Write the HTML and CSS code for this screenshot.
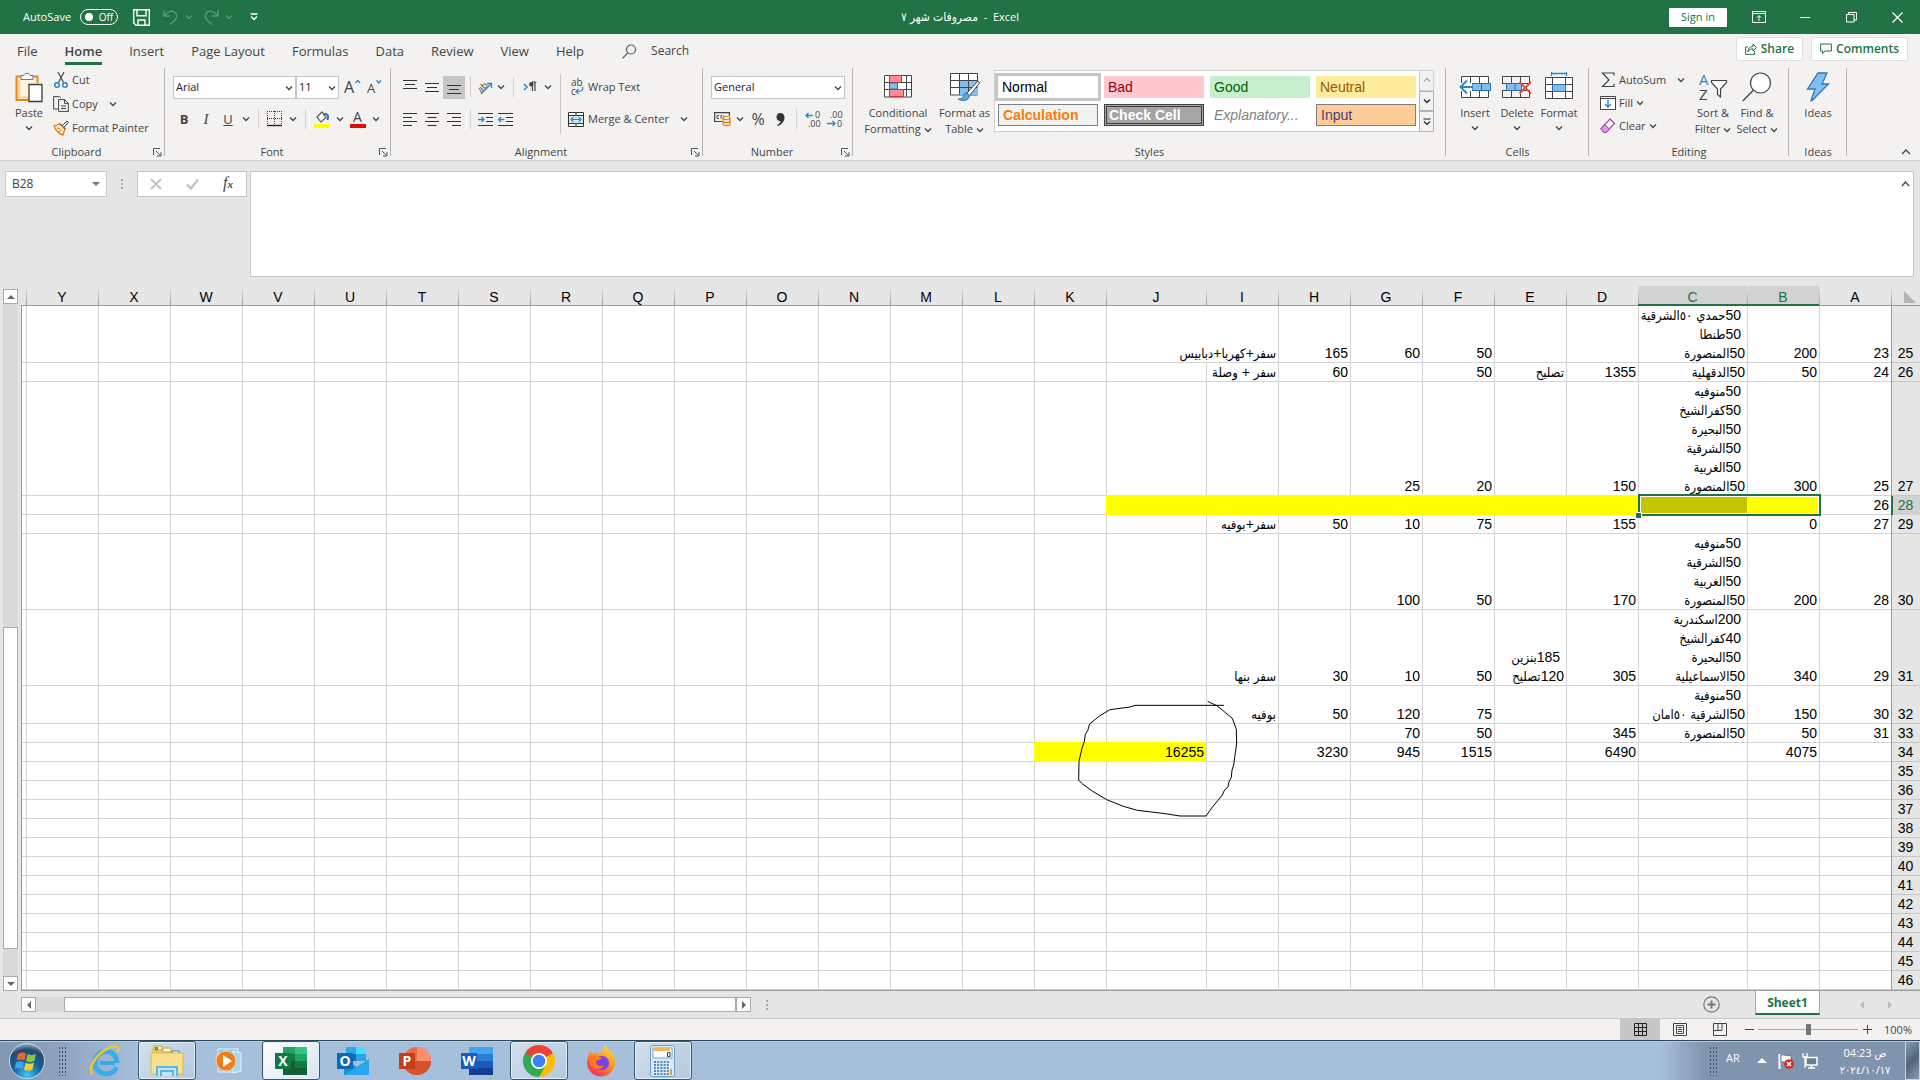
FILE: index.html
```html
<!DOCTYPE html>
<html lang="en">
<head>
<meta charset="utf-8">
<title>مصروفات شهر ٧ - Excel</title>
<link rel="stylesheet" href="styles.css">
</head>
<body>
<svg class="defs" aria-hidden="true">
  <symbol id="chev" viewBox="0 0 8 6"><path d="M1 1.5l3 3 3-3" fill="none" stroke="currentColor" stroke-width="1.3"/></symbol>
  <symbol id="launch" viewBox="0 0 9 9"><path d="M.5 7V.5H7M3 3l4.500 4.500M8 4v4H4" fill="none" stroke="#555"/></symbol>
</svg>

<header class="titlebar">
  <label class="autosave" for="autosave">AutoSave</label>
  <button class="toggle" id="autosave"><i></i>Off</button>
  <button class="qa save" aria-label="Save"><svg width="17" height="17" viewBox="0 0 17 17"><path d="M.7.700h15.600v15.600H3L.7 14zM4 .700v6h9v-6M5 16v-5h7v5" fill="none" stroke="#fff" stroke-width="1.400"/></svg></button>
  <button class="qa dim" aria-label="Undo"><svg width="16" height="16" viewBox="0 0 16 16"><path d="M1 1v6h6M1.500 6.500C5 2 10 1 12.500 4S14 10 7 15.500" fill="none" stroke="currentColor" stroke-width="1.400"/></svg><svg class="c"><use href="#chev"/></svg></button>
  <button class="qa dim" aria-label="Redo"><svg width="16" height="16" viewBox="0 0 16 16"><path d="M15 1v6H9M14.500 6.500C11 2 6 1 3.500 4S2 10 9 15.500" fill="none" stroke="currentColor" stroke-width="1.400"/></svg><svg class="c"><use href="#chev"/></svg></button>
  <button class="qa" aria-label="Customize Quick Access Toolbar"><svg width="8" height="8" viewBox="0 0 8 8"><path d="M.5 1h7M1 3.500l3 3 3-3" fill="none" stroke="#fff" stroke-width="1.300"/></svg></button>
  <h1 class="doc"><bdi>مصروفات شهر ٧</bdi>&nbsp; - &nbsp;Excel</h1>
  <button class="signin">Sign in</button>
  <div class="win">
    <button aria-label="Ribbon Display Options"><svg width="14" height="12" viewBox="0 0 14 12"><path d="M.5.500h13v11H.5zM.5 2.500h13M7 10V5M5 6.500L7 4.500l2 2" fill="none" stroke="#fff"/></svg></button>
    <button aria-label="Minimize"><svg width="10" height="10" viewBox="0 0 10 10"><path d="M0 5.500h10" stroke="#fff"/></svg></button>
    <button aria-label="Restore"><svg width="11" height="11" viewBox="0 0 11 11"><path d="M.5 2.500h7.500v7.500H.5zM2.500 2.500V.500h8v7.500H8" fill="none" stroke="#fff"/></svg></button>
    <button aria-label="Close"><svg width="11" height="11" viewBox="0 0 11 11"><path d="M.5.500l10 10M10.500.500l-10 10" stroke="#fff" stroke-width="1.200"/></svg></button>
  </div>
</header>

<nav class="tabs">
  <a href="#file">File</a><a href="#home" class="on">Home</a><a href="#insert">Insert</a><a href="#layout">Page Layout</a><a href="#formulas">Formulas</a><a href="#data">Data</a><a href="#review">Review</a><a href="#view">View</a><a href="#help">Help</a>
  <button class="search"><svg width="15" height="15" viewBox="0 0 15 15"><circle cx="9" cy="5.500" r="4.500" fill="none" stroke="#555" stroke-width="1.200"/><path d="M5.800 8.800L.5 14.300" stroke="#555" stroke-width="1.200"/></svg>Search</button>
  <div class="collab">
    <button><svg width="12" height="12" viewBox="0 0 12 12"><path d="M3 4H.6v7.400h9V8M2.800 9C3 5.500 5 3.500 8 3.500V1l3.400 3.500L8 8V5.800C6 5.800 4 6.500 2.800 9z" fill="none" stroke="#217346"/></svg>Share</button>
    <button><svg width="12" height="12" viewBox="0 0 12 12"><path d="M.6 1h10.800v7H5l-2.400 2.700V8H.6z" fill="none" stroke="#217346"/></svg>Comments</button>
  </div>
</nav>

<section class="ribbon">
  <div class="group clipboard">
    <div class="tools">
      <button class="big"><span class="pic"><svg width="28" height="30" viewBox="0 0 28 30"><path d="M2 5h20v7h-7v15H2z" fill="#fdf3df"/><path d="M14.500 28H1.500V4.500h21V11" fill="none" stroke="#e08a1e" stroke-width="2"/><path d="M4 8v17.500h10" fill="none" stroke="#f9d08b" stroke-width="2"/><path d="M6 7.500v-4h3C9.500.500 14.500.500 15 3.500h3v4z" fill="#fff" stroke="#777"/><path d="M14 12.500h13v17H14z" fill="#fff" stroke="#3b3b3b" stroke-width="1.300"/></svg></span>Paste<svg class="c"><use href="#chev"/></svg></button>
      <div class="list">
        <button><svg width="16" height="16" viewBox="0 0 16 16"><path d="M5 0l5.500 10.500M11 0L5.500 10.500" stroke="#555" stroke-width="1.400"/><circle cx="4" cy="13" r="2.300" fill="none" stroke="#2b88c9" stroke-width="1.500"/><circle cx="12" cy="13" r="2.300" fill="none" stroke="#2b88c9" stroke-width="1.500"/></svg>Cut</button>
        <button><svg width="16" height="16" viewBox="0 0 16 16"><path d="M5 13H.6V.600h6L8 2M5.600 3.600h6l3.800 3.800v8H5.600zM11.500 3.600v4h4M8 10h5M8 12.500h5" fill="none" stroke="#444"/></svg>Copy<svg class="c far"><use href="#chev"/></svg></button>
        <button><svg width="16" height="16" viewBox="0 0 16 16"><path d="M1 6l6-2 5 5-2 6C6 14 3 11 1 6z" fill="#fbe3c3" stroke="#e07f1a" stroke-width="1.300"/><path d="M7 3.500L12.500 9M9 6l5-5 1.500 1.500-5 5" fill="#fff" stroke="#444"/><path d="M4 8l3 1M6 12l2-2" stroke="#e07f1a"/></svg>Format Painter</button>
      </div>
    </div>
    <footer><span>Clipboard</span><svg class="l"><use href="#launch"/></svg></footer>
  </div>

  <div class="group font">
    <div class="tools rows">
      <div class="row">
        <span class="combo face"><select aria-label="Font"><option>Arial</option></select><svg class="c"><use href="#chev"/></svg></span>
        <span class="combo size"><select aria-label="Font size"><option>11</option></select><svg class="c"><use href="#chev"/></svg></span>
        <button class="ib"><svg width="18" height="18" viewBox="0 0 18 18"><text x="0" y="15" class="t16">A</text><path d="M11.500 5l2.300-2.500L16.100 5" fill="none" stroke="#2b88c9" stroke-width="1.300"/></svg></button>
        <button class="ib"><svg width="18" height="18" viewBox="0 0 18 18"><text x="1" y="15" class="t13">A</text><path d="M10.500 2.500L12.700 5 15 2.500" fill="none" stroke="#2b88c9" stroke-width="1.300"/></svg></button>
      </div>
      <div class="row">
        <button class="ib b">B</button><button class="ib i">I</button><button class="ib u">U</button><button class="dd"><svg class="c"><use href="#chev"/></svg></button><hr>
        <button class="ib"><svg width="16" height="16" viewBox="0 0 16 16"><path d="M0 .500h15M.5 0v14M14.500 0v14M7.500 0v14M0 7.500h15" fill="none" stroke="#444" stroke-dasharray="1 1"/><path d="M0 14.500h15" stroke="#222" stroke-width="1.400"/></svg></button><button class="dd"><svg class="c"><use href="#chev"/></svg></button><hr>
        <button class="ib"><svg width="16" height="17" viewBox="0 0 16 17"><path d="M3 6l5-5 4 5.500-5 4.500z" fill="#fff" stroke="#555" stroke-width="1.200"/><path d="M9 3.500C14 2 15 5 13.500 9" fill="none" stroke="#2b6cb0" stroke-width="2"/><path d="M0 13h16v4H0z" fill="#ff0"/></svg></button><button class="dd"><svg class="c"><use href="#chev"/></svg></button>
        <button class="ib"><svg width="16" height="17" viewBox="0 0 16 17"><text x="3" y="11" class="t14">A</text><path d="M0 13h16v4H0z" fill="#e00b0b"/></svg></button><button class="dd"><svg class="c"><use href="#chev"/></svg></button>
      </div>
    </div>
    <footer><span>Font</span><svg class="l"><use href="#launch"/></svg></footer>
  </div>

  <div class="group align">
    <div class="tools">
      <div class="rows">
        <div class="row">
          <button class="ib"><svg width="14" height="14" viewBox="0 0 14 14"><path d="M0 .500h14M2 4.500h10M0 8.500h14" stroke="#333"/></svg></button><button class="ib"><svg width="14" height="14" viewBox="0 0 14 14"><path d="M0 3.500h14M2 7.500h10M0 11.500h14" stroke="#333"/></svg></button><button class="ib act"><svg width="14" height="14" viewBox="0 0 14 14"><path d="M0 5.500h14M2 9.500h10M0 13.500h14" stroke="#333"/></svg></button><hr>
          <button class="ib slim"><svg width="16" height="16" viewBox="0 0 16 16"><text x="0" y="11" class="t10" transform="rotate(-45 6 8)">ab</text><path d="M4 15L14 5M10 4.500h4.500V9" fill="none" stroke="#2b88c9" stroke-width="1.300"/></svg></button><button class="dd"><svg class="c"><use href="#chev"/></svg></button><hr>
          <button class="ib"><svg width="14" height="12" viewBox="0 0 14 12"><path d="M1 3l3 3-3 3" fill="none" stroke="#2b88c9" stroke-width="1.500"/><path d="M9 1h4.500M9.500 1v9M12 1v9" stroke="#444" stroke-width="1.200"/><circle cx="8.300" cy="3.200" r="2.200" fill="#444"/></svg></button><button class="dd"><svg class="c"><use href="#chev"/></svg></button>
        </div>
        <div class="row">
          <button class="ib"><svg width="14" height="14" viewBox="0 0 14 14"><path d="M0 1.500h14M0 5.500h9M0 9.500h14M0 13.500h9" stroke="#333"/></svg></button><button class="ib"><svg width="14" height="14" viewBox="0 0 14 14"><path d="M0 1.500h14M2.500 5.500h9M0 9.500h14M2.500 13.500h9" stroke="#333"/></svg></button><button class="ib"><svg width="14" height="14" viewBox="0 0 14 14"><path d="M0 1.500h14M5 5.500h9M0 9.500h14M5 13.500h9" stroke="#333"/></svg></button><hr>
          <button class="ib slim"><svg width="15" height="13" viewBox="0 0 15 13"><path d="M0 .500h15M8 4.500h7M8 8.500h7M0 12.500h15" stroke="#333"/><path d="M0 6.500h6M3.500 4L6 6.500 3.500 9" fill="none" stroke="#2b88c9" stroke-width="1.300"/></svg></button><button class="ib"><svg width="15" height="13" viewBox="0 0 15 13"><path d="M0 .500h15M8 4.500h7M8 8.500h7M0 12.500h15" stroke="#333"/><path d="M.5 6.500h6M3 4L.500 6.500 3 9" fill="none" stroke="#2b88c9" stroke-width="1.300"/></svg></button>
        </div>
      </div>
      <hr class="tall">
      <div class="rows">
        <div class="row"><button class="txt"><svg width="16" height="17" viewBox="0 0 16 17"><text x="3" y="7" class="t11">ab</text><text x="3" y="16" class="t11">c</text><path d="M14.500 8c1 4-2 4.500-6 4.500M10.500 10L8 12.500l2.500 2.500" fill="none" stroke="#2b88c9" stroke-width="1.300"/></svg>Wrap Text</button></div>
        <div class="row"><button class="txt"><svg width="16" height="15" viewBox="0 0 16 15"><path d="M.5.500h15v14H.5zM.5 3.500h15M.5 11.500h15M8 .500v3M8 11.500v3" fill="#fff" stroke="#333"/><path d="M1 4h14v7H1z" fill="#d5e9f8"/><path d="M3 7.500h10M5.500 5L3 7.500 5.500 10M10.500 5L13 7.500 10.500 10" fill="none" stroke="#2b88c9" stroke-width="1.200"/></svg>Merge &amp; Center</button><button class="dd last"><svg class="c"><use href="#chev"/></svg></button></div>
      </div>
    </div>
    <footer><span>Alignment</span><svg class="l"><use href="#launch"/></svg></footer>
  </div>

  <div class="group number">
    <div class="tools rows">
      <div class="row"><span class="combo fmt"><select aria-label="Number format"><option>General</option></select><svg class="c"><use href="#chev"/></svg></span></div>
      <div class="row">
        <button class="ib"><svg width="17" height="14" viewBox="0 0 17 14"><path d="M8 9.500H.6V.600h14.800V4" fill="none" stroke="#444" stroke-width="1.200"/><path d="M5 3.500H3v3h2M8 3.500h-1v3M10 3.500v2" stroke="#444" fill="none"/><ellipse cx="12.500" cy="6" rx="3.500" ry="1.500" fill="#fff" stroke="#e07f1a" stroke-width="1.200"/><path d="M9 6v6c0 2 7 2 7 0V6M9 9c0 2 7 2 7 0" fill="none" stroke="#e07f1a" stroke-width="1.300"/></svg></button><button class="dd"><svg class="c"><use href="#chev"/></svg></button><button class="ib pct">%</button><button class="ib"><svg width="9" height="13" viewBox="0 0 9 13"><path d="M4 0c3 0 4.500 2 4.500 4.500C8.500 9 5 12 1.500 13l-.5-1c2-1 3.500-2.500 3.700-4C2 8.500.500 6 .500 4S2 0 4 0z" fill="#333"/></svg></button><hr>
        <button class="ib"><svg width="17" height="17" viewBox="0 0 17 17"><text x="10" y="7" class="t10">0</text><text x="3" y="16" class="t10">.00</text><path d="M1 4.500h7M3.500 2L1 4.500 3.500 7" fill="none" stroke="#2b88c9" stroke-width="1.300"/></svg></button><button class="ib"><svg width="17" height="17" viewBox="0 0 17 17"><text x="3" y="7" class="t10">.00</text><text x="10" y="16" class="t10">0</text><path d="M0 12.500h8M5.500 10L8 12.500 5.500 15" fill="none" stroke="#2b88c9" stroke-width="1.300"/></svg></button>
      </div>
    </div>
    <footer><span>Number</span><svg class="l"><use href="#launch"/></svg></footer>
  </div>

  <div class="group styles">
    <div class="tools">
      <button class="big wide"><span class="pic"><svg width="28" height="23" viewBox="0 0 28 23"><path d="M.5.500h27v21.500H.5z" fill="#fff" stroke="#444"/><path d="M.5 7.500h27M.5 14.500h27M5.500.500v21M22.500.500v21" stroke="#444"/><path d="M5.500.500h12v7h-12zM5.500 14.500h14v7h-14z" fill="#ff8a92" stroke="#d13438"/><path d="M5.500 8h8v6h-8z" fill="#83beec" stroke="#2b6cb0"/></svg></span><span>Conditional<br>Formatting <svg class="c"><use href="#chev"/></svg></span></button>
      <button class="big wide2"><span class="pic"><svg width="30" height="28" viewBox="0 0 30 28"><path d="M.5.500h27v21.500H.5z" fill="#fff" stroke="#444"/><path d="M10 8h18v14H10z" fill="#83beec"/><path d="M.5 7.500h27M.5 14.500h27M9.500.500v21M18.500.500v21" stroke="#444"/><path d="M28 8L17 20l2.500 2.500L29.500 10z" fill="#fff" stroke="#444"/><path d="M17 20c-3 0-3 2-4 4s-3 2-5 2c4 2.500 11 2 11.500-3.500z" fill="#5aa7e0" stroke="#2b6cb0"/></svg></span><span>Format as<br>Table <svg class="c"><use href="#chev"/></svg></span></button>
      <div class="gallery">
        <div class="swatches">
          <button class="s-normal">Normal</button><button class="s-bad">Bad</button><button class="s-good">Good</button><button class="s-neutral">Neutral</button>
          <button class="s-calc">Calculation</button><button class="s-check">Check Cell</button><button class="s-expl">Explanatory...</button><button class="s-input">Input</button>
        </div>
        <div class="spin"><button aria-label="Up" class="off"><svg class="c up"><use href="#chev"/></svg></button><button aria-label="Down"><svg class="c"><use href="#chev"/></svg></button><button aria-label="More"><svg width="8" height="8" viewBox="0 0 8 8"><path d="M.5 1h7M1 3.500l3 3 3-3" fill="none" stroke="#222" stroke-width="1.200"/></svg></button></div>
      </div>
    </div>
    <footer><span>Styles</span></footer>
  </div>

  <div class="group cells">
    <div class="tools">
      <button class="big"><span class="pic"><svg width="32" height="24" viewBox="0 0 32 24"><path d="M2.500 1.500h27v21h-27zM11.500 1.500v21M20.500 1.500v21" fill="#fff" stroke="#444"/><path d="M13 8.500h18.500v7H13zM22.500 8.500v7" fill="#83beec" stroke="#2b6cb0"/><path d="M0 8h13v8H0z" fill="#fff"/><path d="M14 12H1.500M8 5.500L1.500 12 8 18.500" fill="none" stroke="#2b88c9" stroke-width="2"/></svg></span>Insert<svg class="c"><use href="#chev"/></svg></button>
      <button class="big"><span class="pic"><svg width="32" height="24" viewBox="0 0 32 24"><path d="M1.500 8V1.500h27V8M1.500 16v6.500h27V16M10.500 1.500V8M19.500 1.500V8M10.500 16v6.500M19.500 16v6.500M1 8.500h28M1 15.500h28" fill="none" stroke="#444"/><path d="M5.500 8.500h15v7h-15zM14 8.500v7" fill="#83beec" stroke="#2b6cb0"/><path d="M18.500 7L30 18.500M30 7L18.500 18.500" stroke="#e8453c" stroke-width="1.800"/></svg></span>Delete<svg class="c"><use href="#chev"/></svg></button>
      <button class="big"><span class="pic"><svg width="30" height="30" viewBox="0 0 30 30"><path d="M1.500 5.500h27v21h-27zM1.500 12.500h27M1.500 19.500h27M8.500 5.500v21M21.500 5.500v21" fill="#fff" stroke="#444"/><path d="M8.500 12.500h13v7h-13z" fill="#83beec" stroke="#2b6cb0"/><path d="M8 1.500h14M7.500 0v4M22.500 0v4" stroke="#2b88c9" stroke-width="1.300"/></svg></span>Format<svg class="c"><use href="#chev"/></svg></button>
    </div>
    <footer><span>Cells</span></footer>
  </div>

  <div class="group editing">
    <div class="tools">
      <div class="list">
        <button><svg width="16" height="16" viewBox="0 0 16 16"><path d="M14 3.500V1H2.500L9 8l-6.500 6.500H14V12" fill="none" stroke="#444" stroke-width="1.200"/></svg>AutoSum<svg class="c far"><use href="#chev"/></svg></button>
        <button><svg width="16" height="14" viewBox="0 0 16 14"><path d="M.5.500h15v13H.5zM.5 2.500h15" fill="#fff" stroke="#444"/><path d="M8 4v7M5 8l3 3 3-3" fill="none" stroke="#2b88c9" stroke-width="1.400"/></svg>Fill <svg class="c"><use href="#chev"/></svg></button>
        <button><svg width="16" height="16" viewBox="0 0 16 16"><path d="M10 1l4.500 4.500L6 14.500H4L1 10.500z" fill="#fff" stroke="#a13fae" stroke-width="1.200"/><path d="M4.800 6.500L9.500 11 6 14.500H4L1 10.500z" fill="#dc9be3" stroke="#a13fae"/></svg>Clear <svg class="c"><use href="#chev"/></svg></button>
      </div>
      <button class="big"><span class="pic"><svg width="30" height="30" viewBox="0 0 30 30"><text x="1" y="13" class="t15 blue">A</text><text x="1" y="28" class="t15">Z</text><path d="M13.500 8.500h15v2l-6 6.500v8l-3-2.500V17l-6-6.500z" fill="#fff" stroke="#444" stroke-width="1.200"/></svg></span><span>Sort &amp;<br>Filter <svg class="c"><use href="#chev"/></svg></span></button>
      <button class="big"><span class="pic"><svg width="30" height="30" viewBox="0 0 30 30"><circle cx="18.500" cy="11" r="10" fill="#fff" stroke="#444" stroke-width="1.200"/><path d="M11.500 18L.8 29" stroke="#444" stroke-width="1.300"/></svg></span><span>Find &amp;<br>Select <svg class="c"><use href="#chev"/></svg></span></button>
    </div>
    <footer><span>Editing</span></footer>
  </div>

  <div class="group ideas">
    <div class="tools"><button class="big"><span class="pic"><svg width="24" height="30" viewBox="0 0 24 30"><path d="M12 1h9l-5 11h6.500L6 28.500h-1L9 17H1.500z" fill="#83beec" stroke="#2b78c0" stroke-width="1.300"/></svg></span>Ideas</button></div>
    <footer><span>Ideas</span></footer>
  </div>
  <button class="collapse" aria-label="Collapse the Ribbon"><svg width="10" height="6" viewBox="0 0 10 6"><path d="M1 5l4-4 4 4" fill="none" stroke="#444" stroke-width="1.300"/></svg></button>
</section>

<section class="formula">
  <div class="namebox"><input aria-label="Name box" value="B28"><i class="tri"></i></div>
  <div class="dots"><i></i><i></i><i></i></div>
  <div class="fx">
    <button aria-label="Cancel"><svg width="12" height="12" viewBox="0 0 12 12"><path d="M1 1l10 10M11 1L1 11" stroke="#c4c4c4" stroke-width="2"/></svg></button>
    <button aria-label="Enter"><svg width="13" height="12" viewBox="0 0 13 12"><path d="M1 6.500L5 10.500 12 1.500" fill="none" stroke="#c4c4c4" stroke-width="2.400"/></svg></button>
    <button class="fn">f<small>x</small></button>
  </div>
  <div class="entry"><textarea aria-label="Formula bar"></textarea><svg width="9" height="6" viewBox="0 0 9 6"><path d="M1 5l3.500-4L8 5" fill="none" stroke="#444" stroke-width="1.300"/></svg></div>
</section>

<main class="book">
  <div class="vbar"><button aria-label="Scroll up"><i class="up"></i></button><div class="track"><div class="thumb"></div></div><button aria-label="Scroll down"><i class="down"></i></button></div>
  <div class="pane">
    <table dir="rtl" id="sheet"></table>
    <div class="selection"><i></i></div>
    <svg class="ink" viewBox="108 540 492 360"><path d="M552 556H285L270 561 240 565 210 569 178 588 149 612 143 632 136 643 133 665 126 685 117 724 116 780 125 790 155 812 200 839 250 859 292 871 335 876 375 881 420 888H498L515 864 547 825 552 813 564 800 567 785 574 772 576 750 581 735 584 712 590 672 589 628 577 595 548 571 530 557 503 544" fill="none" stroke="#000" stroke-width="3"/></svg>
  </div>
</main>

<div class="sheetbar">
  <div class="hbar"><button aria-label="Scroll left"><i class="left"></i></button><div class="track"><div class="thumb"></div></div><button aria-label="Scroll right"><i class="right"></i></button></div>
  <div class="dots"><i></i><i></i><i></i></div>
  <div class="tabstrip">
    <button class="add" aria-label="New sheet"><svg width="17" height="17" viewBox="0 0 17 17"><circle cx="8.500" cy="8.500" r="7.700" fill="none" stroke="#777" stroke-width="1.200"/><path d="M4.500 8.500h8M8.500 4.500v8" stroke="#777" stroke-width="2"/></svg></button>
    <button class="sheet">Sheet1</button>
    <button class="nav" aria-label="Next sheets"><i class="left"></i></button><button class="nav" aria-label="Previous sheets"><i class="right"></i></button>
  </div>
</div>

<footer class="status">
  <button class="view on" aria-label="Normal"><svg width="13" height="13" viewBox="0 0 13 13"><path d="M.5.500h12v12H.5zM.5 4.500h12M.5 8.500h12M4.500.500v12M8.500.500v12" fill="none" stroke="#222"/></svg></button>
  <button class="view" aria-label="Page Layout"><svg width="14" height="13" viewBox="0 0 14 13"><path d="M.5.500h13v12H.5zM3.500 2.500h7v8h-7zM5 4.500h4M5 6.500h4M5 8.500h4" fill="none" stroke="#444"/></svg></button>
  <button class="view" aria-label="Page Break Preview"><svg width="14" height="13" viewBox="0 0 14 13"><path d="M.5 12.500V.500h13v12zM5 .500V7M9 .500V7M.5 7.500H9" fill="none" stroke="#444"/></svg></button>
  <button class="zoomb" aria-label="Zoom out"><svg width="9" height="9" viewBox="0 0 9 9"><path d="M0 4.500h9" stroke="#444"/></svg></button>
  <input type="range" aria-label="Zoom" min="0" max="100" value="50">
  <button class="zoomb" aria-label="Zoom in"><svg width="9" height="9" viewBox="0 0 9 9"><path d="M0 4.500h9M4.500 0v9" stroke="#444"/></svg></button>
  <span class="pctv">100%</span>
</footer>

<div class="taskbar">
  <button class="start" aria-label="Start"><svg width="38" height="38" viewBox="0 0 38 38"><defs><radialGradient id="orb" cx=".5" cy=".9" r=".9"><stop offset="0" stop-color="#3ec6f2"/><stop offset=".45" stop-color="#12639c"/><stop offset=".8" stop-color="#27486b"/><stop offset="1" stop-color="#9ab4cd"/></radialGradient></defs><circle cx="19" cy="19" r="17.500" fill="url(#orb)" stroke="#c5dbec"/><path d="M10 12c3-2 5-2 8-.5l-1.500 7c-3-1.500-5-1.500-8 0z" fill="#f0642c"/><path d="M19.500 12c3 1.500 5 1.500 8.500 0l-1.700 7c-3 1.500-5 1.500-8.300 0z" fill="#8dc63f"/><path d="M8 20.500c3-2 5-1.500 8-.3l-1.500 7c-3-1.500-5-1.500-8 0z" fill="#3fa2e6"/><path d="M17.500 20.700c3 1.500 5 1.500 8.500 0l-1.700 7c-3 1.500-5 1.500-8.300 0z" fill="#fdc92f"/></svg></button>
  <div class="grip"></div>
  <div class="apps">
    <button aria-label="Internet Explorer"><svg width="32" height="32" viewBox="0 0 32 32"><path d="M26 18H11" stroke="#33a9e6" stroke-width="4"/><path d="M27.500 22C26 26 22 29 17.500 29 10 29 6 23.500 6 17.500S10.500 6.500 17 6.500 28 11 27.800 18" fill="none" stroke="#38ade8" stroke-width="5"/><path d="M3 29C-1 24 6 11 16 5S31 1 29 7" fill="none" stroke="#f5c52c" stroke-width="2.500"/></svg></button>
    <button class="open" aria-label="File Explorer"><svg width="34" height="32" viewBox="0 0 34 32"><path d="M2 3h10v3h18v20H2z" fill="#e9c95a"/><path d="M4 1h8v4H4z" fill="#f8f3d0" stroke="#caa43a"/><path d="M5 2h3v3H5z" fill="#35a853"/><path d="M13 3h8v4h-8z" fill="#f8f3d0" stroke="#caa43a"/><path d="M22 6h7v3h-7z" fill="#fff" stroke="#3f7fbb"/><path d="M1 8h32v21H1z" fill="#f8e08c" stroke="#d9b850"/><path d="M7 31V22h20v9M11 31v-5h12v5" fill="#bfe6f7" stroke="#62b4dc" stroke-width="2"/></svg></button>
    <button aria-label="Windows Media Player"><svg width="30" height="30" viewBox="0 0 30 30"><path d="M4 3h20v23H4z" fill="#8fc5e6" stroke="#e5f4fc"/><path d="M19 5l8 2v18l-8 2z" fill="#a9d6ee" stroke="#e5f4fc"/><circle cx="12" cy="15" r="10" fill="#ef7d1a" stroke="#fbd0a0"/><path d="M9 9l9 6-9 6z" fill="#fff"/></svg></button>
    <button class="open lit" aria-label="Excel"><svg width="32" height="32" viewBox="0 0 32 32"><path d="M8 2h24v28H8z" fill="#21a366"/><path d="M20 2h12v7H20z" fill="#33c481"/><path d="M8 9h12v7H8z" fill="#107c41"/><path d="M8 16h24v14H8z" fill="#185c37"/><path d="M20 16h12v7H20z" fill="#107c41"/><path d="M0 8h16v16H0z" fill="#107c41"/><text x="8" y="21" class="app">X</text></svg></button>
    <button aria-label="Outlook"><svg width="32" height="32" viewBox="0 0 32 32"><path d="M9 2h20v14H9z" fill="#0f6cbd"/><path d="M9 2h10v7H9zM19 9h10v7H19z" fill="#28a8ea"/><path d="M19 2h10v7H19z" fill="#50d9ff"/><path d="M7 14l13 8 12-8v16H7z" fill="#1490df"/><path d="M7 30l25-16v16z" fill="#28a8ea"/><path d="M0 8h16v16H0z" fill="#0f67b8"/><text x="8" y="21" class="app">O</text></svg></button>
    <button aria-label="PowerPoint"><svg width="32" height="32" viewBox="0 0 32 32"><circle cx="18" cy="16" r="14" fill="#ed6c47"/><path d="M18 2a14 14 0 0 1 14 14H18z" fill="#ff8f6b"/><path d="M4 16h28a14 14 0 0 1-28 0z" fill="#d35230"/><path d="M0 8h16v16H0z" fill="#c43e1c"/><text x="8" y="21" class="app">P</text></svg></button>
    <button aria-label="Word"><svg width="32" height="32" viewBox="0 0 32 32"><path d="M8 2h24v7H8z" fill="#41a5ee"/><path d="M8 9h24v7H8z" fill="#2b7cd3"/><path d="M8 16h24v7H8z" fill="#185abd"/><path d="M8 23h24v7H8z" fill="#103f91"/><path d="M0 8h16v16H0z" fill="#185abd"/><text x="8" y="21" class="app">W</text></svg></button>
    <button class="open" aria-label="Chrome"><svg width="34" height="34" viewBox="0 0 34 34"><path d="M17 17L3.100 9A16 16 0 0 1 30.900 9z" fill="#ea4335"/><path d="M17 17L30.900 9A16 16 0 0 1 17 33z" fill="#fbbc04"/><path d="M17 17v16A16 16 0 0 1 3.100 9z" fill="#34a853"/><path d="M3 9h28L17 17z" fill="#ea4335"/><path d="M10 21L3.100 9 17 17zM24 21l-7 12v-12z" fill="#34a853"/><circle cx="17" cy="17" r="8" fill="#fff"/><circle cx="17" cy="17" r="6.300" fill="#3b82f0"/></svg></button>
    <button aria-label="Firefox"><svg width="32" height="32" viewBox="0 0 32 32"><defs><linearGradient id="ff" x1=".8" y1="0" x2=".2" y2="1"><stop offset="0" stop-color="#ffdf3a"/><stop offset=".5" stop-color="#ff8a1f"/><stop offset="1" stop-color="#f0246b"/></linearGradient></defs><path d="M20 0c2 5 10 7 10 17A14 14 0 0 1 2 18C2 12 4 9 6 6c0 2 1 3 2 3 3-2 7-1 8 0 2-3 2-6 4-9z" fill="url(#ff)"/><circle cx="17" cy="18" r="7" fill="#7542e5"/><path d="M5 12c5-3 9 0 12 1-2 3-5 1-6 4 0 4 5 5 8 3-2 6-12 5-14-3z" fill="#ff7a1f"/></svg></button>
    <button class="open" aria-label="Calculator"><svg width="26" height="32" viewBox="0 0 26 32"><rect x=".5" y=".5" width="24" height="31" rx="2" fill="#d9e9f6" stroke="#6d9fc9"/><path d="M3 3h19v10H3z" fill="#f6fbff" stroke="#8ab"/><path d="M3 3h17v3H3z" fill="#f8b45c"/><path d="M17.500 7.500h2.500v4h-2.500z" fill="none" stroke="#345"/><path d="M4 17h15M4 20h15M4 23h15M4 26h15M4 29h15" stroke="#4f8bbd" stroke-width="2" stroke-dasharray="2 1.200"/><path d="M20 24h2v6h-2z" fill="#f09a2a"/></svg></button>
  </div>
  <div class="tray">
    <div class="grip"></div>
    <span class="lang">AR</span>
    <button aria-label="Show hidden icons"><i class="up"></i></button>
    <button aria-label="Action Center"><svg width="16" height="16" viewBox="0 0 16 16"><path d="M1.500 1v15" stroke="#fff" stroke-width="2"/><path d="M3 2c4-1 5 2 10 0v7c-5 2-6-1-10 0z" fill="#fff" stroke="#555" stroke-width=".7"/><circle cx="11" cy="11" r="4.800" fill="#d9281e"/><path d="M9 9l4 4M13 9l-4 4" stroke="#fff" stroke-width="1.600"/></svg></button>
    <button aria-label="Network"><svg width="16" height="16" viewBox="0 0 16 16"><path d="M4 4.500h11v7.500H4z" fill="#6a7c92" stroke="#fff" stroke-width="1.500"/><path d="M6 15h7M9.500 12v3" stroke="#fff" stroke-width="1.600"/><path d="M1 0v4h4V0M3 4v11" fill="none" stroke="#fff" stroke-width="1.300"/></svg></button>
    <time class="clock"><span>04:23 ص</span><span>٢٠٢٤/١٠/١٧</span></time>
    <button class="desk" aria-label="Show desktop"></button>
  </div>
</div>
<script src="sheet.js"></script>
</body>
</html>
```
FILE: sheet.js
```js
// Sheet contents, keyed by row number then column letter.
// A cell that holds several lines separates them with "|".
const columns = "ABCDEFGHIJKLMNOPQRSTUVWXY".split("");
const data = {
  25: {A: "23", B: "200", C: "50حمدي ٥٠الشرقية|50طنطا|50المنصورة", F: "50", G: "60", H: "165", I: "سفر+كهربا+دبابيس"},
  26: {A: "24", B: "50", C: "50الدقهلية", D: "1355", E: "تصليح", F: "50", H: "60", I: "سفر + وصلة"},
  27: {A: "25", B: "300", C: "50منوفيه|50كفرالشيخ|50البحيرة|50الشرقية|50الغربية|50المنصورة", D: "150", F: "20", G: "25"},
  28: {A: "26"},
  29: {A: "27", B: "0", D: "155", F: "75", G: "10", H: "50", I: "سفر+بوفيه"},
  30: {A: "28", B: "200", C: "50منوفيه|50الشرقية|50الغربية|50المنصورة", D: "170", F: "50", G: "100"},
  31: {A: "29", B: "340", C: "200اسكندرية|40كفرالشيخ|50البحيرة|50الاسماعيلية", D: "305", E: "185بنزين|120تصليح", F: "50", G: "10", H: "30", I: "سفر بنها"},
  32: {A: "30", B: "150", C: "50منوفية|50الشرقية ٥٠امان", F: "75", G: "120", H: "50", I: "بوفيه"},
  33: {A: "31", B: "50", C: "50المنصورة", D: "345", F: "50", G: "70"},
  34: {B: "4075", D: "6490", F: "1515", G: "945", H: "3230", J: "16255"}
};
const filled = {28: "BCDEFGHIJ", 34: "JK"};
const widths = {C: "w-c", J: "w-j"};

function cellHtml(text) {
  const lines = text.split("|");
  return lines.map((line, n) => {
    const lead = n < lines.length - 1 ? "\u00a0" : "";
    return "<div>" + lead + line.replace(/[\u0600-\u06ff]+/g, "<span>$&</span>") + "</div>";
  }).join("");
}

let html = "<colgroup><col class='w-num'>";
for (const c of columns) html += `<col class="${widths[c] || "w-std"}">`;
html += "<col></colgroup><thead><tr><th class='corner'><i></i></th>";
for (const c of columns) html += `<th class="${c === "B" || c === "C" ? "sel" : ""}">${c}</th>`;
html += "<th></th></tr></thead><tbody>";
for (let r = 25; r <= 46; r++) {
  const row = data[r] || {};
  html += `<tr><th class="${r === 28 ? "sel" : ""}">${r}</th>`;
  for (const c of columns) {
    let cls = (filled[r] || "").includes(c) ? "fill" : "";
    if (r === 28 && c === "C") cls = "fill dark";
    if (r === 25 && c === "I") cls = "spill";
    html += `<td class="${cls}">${row[c] ? cellHtml(row[c]) : ""}</td>`;
  }
  html += "<td class='edge'></td></tr>";
}
document.getElementById("sheet").innerHTML = html + "</tbody>";
```
FILE: styles.css
```css
* { box-sizing: border-box; }
body { margin: 0; height: 100vh; display: flex; flex-direction: column; overflow: hidden; background: #e6e6e6; color: #444; font: 11px/16px "Open Sans", "Noto Sans", "DejaVu Sans Condensed", sans-serif; }
button { margin: 0; padding: 0; border: 0; background: none; color: inherit; font: inherit; display: flex; align-items: center; justify-content: center; }
svg { flex: none; display: block; overflow: visible; }
.defs { width: 0; height: 0; position: absolute; }
.c { width: 8px; height: 6px; display: inline-block; }
.l { width: 9px; height: 9px; }

/* title bar */
.titlebar { height: 34px; flex: none; background: #217346; color: #fff; display: flex; align-items: center; padding-left: 23px; position: relative; }
.autosave { width: 57px; }
.toggle { width: 38px; height: 16px; border: 1px solid #fff; border-radius: 8px; font-size: 10px; gap: 6px; margin-right: 15px; }
.toggle i { width: 8px; height: 8px; border-radius: 50%; background: #fff; }
.qa { gap: 6px; margin-right: 13px; }
.qa.dim { color: #559a74; margin-right: 10px; }
.qa.dim + .qa:not(.dim) { margin-left: 7px; }
.doc { position: absolute; left: 0; right: 0; margin: 0; text-align: center; font: 11px/16px "Open Sans", "DejaVu Sans Condensed", sans-serif; pointer-events: none; }
.doc bdi { font-size: 12px; }
.signin { margin-left: auto; width: 58px; height: 19px; background: #fff; color: #217346; border-radius: 1px; }
.win { display: flex; margin: 0 0 0 9px; }
.win button { width: 46px; height: 32px; }

/* ribbon tabs */
.tabs { height: 34px; flex: none; background: #f3f2f1; display: flex; align-items: center; gap: 27px; padding: 0 12px 0 17px; font-size: 12px; }
.tabs a { color: #444; text-decoration: none; font-size: 13px; line-height: 22px; border-bottom: 3px solid transparent; margin-top: 2px; }
.tabs a.on { font-weight: 600; border-color: #217346; }
.search { gap: 14px; margin-left: 11px; }
.collab { margin-left: auto; display: flex; gap: 8px; margin-bottom: 4px; }
.collab button { height: 24px; background: #fff; border: 1px solid #e1dfdd; border-radius: 2px; color: #217346; font-weight: 600; gap: 4px; padding: 0 8px; }

/* ribbon */
.ribbon { flex: none; display: flex; background: #f3f2f1; border-bottom: 1px solid #d2d0ce; }
.group { height: 92px; flex: none; display: flex; flex-direction: column; background: linear-gradient(#b5b3b1, #b5b3b1) right top / 1px 88px no-repeat; }
.group .tools { height: 76px; display: flex; }
.group footer { height: 16px; display: flex; align-items: center; padding-right: 3px; }
.group footer span { flex: 1; text-align: center; }
.group footer span:last-child { padding-left: 3px; }
.clipboard { width: 165px; }
.font { width: 226px; }
.align { width: 312px; }
.number { width: 150px; }
.styles { width: 593px; }
.cells { width: 143px; }
.editing { width: 200px; }
.ideas { width: 58px; }
.clipboard .tools, .font .tools, .align .tools, .number .tools, .cells .tools, .ideas .tools { padding-left: 8px; }
.big { flex-direction: column; justify-content: flex-start; width: 42px; white-space: nowrap; text-align: center; }
.big .pic { height: 37px; display: flex; align-items: center; }
.big > .c { margin-top: 4px; }
.clipboard .big { margin-right: 3px; }
.wide { width: 74px; margin-left: 8px; }
.wide2 { width: 59px; }
.list { display: flex; flex-direction: column; }
.list button { height: 24px; justify-content: flex-start; gap: 3px; }
.list .far { margin-left: 8px; }
.editing .list { padding-left: 11px; width: 102px; }
.editing .list button { height: 23px; }
.editing .big { width: 44px; }
.group .rows { display: flex; flex-direction: column; gap: 8px; padding-top: 7px; }
.row { height: 24px; display: flex; align-items: center; }
.ib { width: 22px; height: 23px; }
.ib.slim { width: 18px; }
.ib.act { background: #c6c6c6; }
.dd { width: 14px; height: 23px; }
.dd.last { margin-left: 8px; }
.row hr { width: 1px; height: 20px; margin: 0 5px; border: 0; background: #d2d0ce; }
.tall { width: 1px; height: 60px; margin: 6px 7px 0 5px; border: 0; background: #c8c6c4; }
.txt { gap: 4px; }
.b { font-weight: 700; font-size: 13px; }
.i { font: italic 15px "Liberation Serif", serif; }
.u { text-decoration: underline; font-size: 13px; }
.pct { font-size: 16px; }
.t16 { font-size: 16px; fill: #444; }
.t15 { font-size: 15px; fill: #444; }
.t14 { font-size: 14px; fill: #444; }
.t13 { font-size: 13px; fill: #444; }
.t11 { font-size: 10px; fill: #444; }
.t10 { font-size: 9px; fill: #444; }
.blue { fill: #2b88c9; }
.combo { position: relative; height: 23px; background: #fff; border: 1px solid #c6c6c6; }
.combo select { width: 100%; height: 100%; padding: 0 2px; border: 0; background: none; appearance: none; font: inherit; color: #222; }
.combo .c { position: absolute; right: 2px; top: 8px; pointer-events: none; }
.face { width: 123px; }
.size { width: 43px; margin-right: 3px; }
.fmt { width: 134px; }
.gallery { display: flex; height: 62px; margin-top: 2px; }
.swatches { display: grid; grid-template-columns: repeat(4, 100px); grid-auto-rows: 22px; gap: 6px; padding: 5px 3px; border: 1px solid #d2d0ce; border-right: 0; background: #fff; }
.swatches button { justify-content: flex-start; padding-left: 4px; font: 14px/18px "Liberation Sans", Arial, sans-serif; }
.s-normal { outline: 3px solid #c6c6c6; color: #000; }
.s-bad { background: #ffc7ce; color: #9c0006; }
.s-good { background: #c6efce; color: #006100; }
.s-neutral { background: #ffeb9c; color: #9c5700; }
.swatches .s-calc { background: #f2f2f2; color: #fa7d00; border: 1px solid #7f7f7f; font-weight: 700; }
.swatches .s-check { background: #a5a5a5; color: #fff; border: 3px double #3f3f3f; font-weight: 700; padding-left: 2px; }
.swatches .s-expl { color: #7f7f7f; font-style: italic; }
.swatches .s-input { background: #ffcc99; color: #3f3f76; border: 1px solid #7f7f7f; }
.spin { display: flex; flex-direction: column; width: 15px; }
.spin button { flex: 1; border: 1px solid #b5b3b1; color: #222; }
.spin .off { color: #aaa; border-color: #d2d0ce; }
.up.c { transform: rotate(180deg); }
.collapse { margin: auto 8px 2px auto; width: 12px; height: 12px; }

/* formula bar */
.formula { height: 125px; flex: none; display: flex; align-items: flex-start; padding: 10px 6px 9px 5px; }
.namebox { display: flex; align-items: center; width: 102px; height: 26px; border: 1px solid #c6c6c6; background: #fff; padding-right: 6px; }
.namebox input { flex: 1; min-width: 0; border: 0; padding: 0 0 0 6px; font: inherit; font-size: 12px; color: #444; background: none; }
.tri { border: 4px solid transparent; border-top-color: #777; border-bottom: 0; }
.dots { display: flex; flex-direction: column; gap: 2px; margin: 8px 14px; }
.dots i { width: 2px; height: 2px; background: #aaa; }
.fx { display: flex; width: 110px; height: 26px; border: 1px solid #c6c6c6; background: #fff; }
.fx button { flex: 1; }
.fx .fn { align-items: baseline; font: italic 16px/22px "Liberation Serif", serif; }
.fn small { font-size: 11px; font-weight: 700; }
.entry { flex: 1; height: 106px; margin-left: 3px; border: 1px solid #c6c6c6; background: #fff; display: flex; padding: 0 3px 0 0; }
.entry textarea { flex: 1; border: 0; resize: none; background: none; }
.entry svg { margin-top: 9px; }

/* sheet */
.book { flex: 1; min-height: 0; display: flex; }
.vbar { width: 15px; margin: 3px 3px 0 3px; display: flex; flex-direction: column; }
.vbar button, .hbar button { width: 15px; height: 15px; flex: none; background: #fff; border: 1px solid #ababab; }
.track { flex: 1; background: #dadada; }
.thumb { background: #fff; border: 1px solid #ababab; }
.vbar .track { padding: 323px 0 27px; display: flex; }
.vbar .thumb { flex: 1; }
i.up { border: 4px solid transparent; border-bottom-color: #666; border-top: 0; }
i.down { border: 4px solid transparent; border-top-color: #666; border-bottom: 0; }
i.left { border: 4px solid transparent; border-right-color: #666; border-left: 0; }
i.right { border: 4px solid transparent; border-left-color: #666; border-right: 0; }
.pane { flex: 1; min-width: 0; position: relative; overflow: hidden; border-bottom: 1px solid #999; }
#sheet { width: 100%; table-layout: fixed; border-collapse: separate; border-spacing: 0; background: #fff; color: #000; font: 14px/19px "Liberation Sans", Arial, "DejaVu Sans Condensed", sans-serif; }
#sheet td, #sheet th { padding: 0; font-weight: 400; white-space: nowrap; height: 19px; }
.w-num { width: 29px; }
.w-std { width: 72px; }
.w-c { width: 109px; }
.w-j { width: 100px; }
#sheet thead th { height: 20px; line-height: 18px; vertical-align: bottom; background: linear-gradient(#e6e6e6, #9a9a9a) left / 1px 100% no-repeat #e6e6e6; box-shadow: inset 0 -1px #999; }
#sheet thead th:last-child { background: #e6e6e6; }
#sheet thead th.sel { background-color: #d2d2d2; color: #217346; box-shadow: inset 0 -2px #217346; }
#sheet .corner i { display: block; border: 6px solid transparent; border-left-color: #b4b4b4; border-bottom-color: #b4b4b4; width: 0; margin: 0 4px 3px 13px; }
#sheet tbody th { background: #e6e6e6; vertical-align: bottom; box-shadow: inset 1px 0 #999, inset 0 -1px #c6c6c6; }
#sheet tbody th.sel { background: #d2d2d2; color: #217346; box-shadow: inset 2px 0 #217346; }
#sheet td { vertical-align: bottom; text-align: right; padding-right: 2px; box-shadow: inset 1px 0 #d4d4d4, inset 0 -1px #d4d4d4; }
#sheet td span { font-size: 13px; }
#sheet td div { height: 19px; }
#sheet td.edge { box-shadow: inset 1px 0 #999, inset 0 -1px #d4d4d4; }
#sheet td.fill { background: #ff0; box-shadow: 0 -1px #ff0; }
#sheet td.dark { background: #c4c400; }
#sheet td.spill { box-shadow: inset 0 -1px #d4d4d4; }
.selection { position: absolute; right: 99px; top: 208px; width: 183px; height: 22px; border: 2px solid #217346; box-shadow: inset 0 0 0 1px #fff; }
.selection i { position: absolute; left: -4px; bottom: -4px; width: 6px; height: 6px; background: #217346; border: 1px solid #fff; border-left: 0; border-bottom: 0; }
.ink { position: absolute; right: 680px; top: 414px; width: 164px; height: 120px; }

/* sheet tabs and horizontal scroll bar */
.sheetbar { height: 27px; flex: none; display: flex; align-items: center; padding-left: 21px; }
.sheetbar .dots { margin: 0 15px; }
.hbar { display: flex; width: 730px; }
.hbar .track { padding-left: 28px; }
.hbar .thumb { height: 15px; }
.tabstrip { margin-left: auto; display: flex; align-items: center; height: 27px; padding-right: 16px; }
.sheet { width: 65px; height: 24px; padding-top: 2px; margin: 0 28px 0 35px; align-self: flex-start; background: #fff; color: #217346; font-weight: 700; font-size: 12px; border: 1px solid #ababab; border-top: 0; border-bottom: 2px solid #217346; }
.nav { width: 28px; }
.nav i { opacity: .35; }

/* status bar */
.status { height: 22px; flex: none; display: flex; align-items: center; justify-content: flex-end; background: #f3f2f1; border-top: 1px solid #c6c6c6; padding-right: 8px; }
.view { width: 40px; height: 21px; }
.view.on { background: #c6c6c6; }
.zoomb { width: 18px; }
.status input { appearance: none; width: 100px; height: 12px; margin: 0; background: linear-gradient(#ababab, #ababab) center / 100% 1px no-repeat; }
.status input::-webkit-slider-thumb { appearance: none; width: 5px; height: 11px; background: #777; }
.pctv { width: 36px; text-align: right; }

/* taskbar */
.taskbar { height: 40px; flex: none; display: flex; align-items: center; padding-left: 8px; border-top: 1px solid #2a4a5a; background: linear-gradient(90deg, #8396b0, #8fa3bf 60px, #a6c0dc 140px, #a6c0dc calc(100% - 260px), #8094ae calc(100% - 215px)); box-shadow: inset 0 1px #b8cce0; }
.grip { width: 8px; height: 30px; background: radial-gradient(circle, #3d5068 1px, transparent 1px) 0 0 / 3px 4px; }
.start { width: 38px; height: 38px; margin-right: 12px; }
.apps { display: flex; gap: 4px; margin-left: 10px; }
.apps button { width: 58px; height: 39px; border-radius: 3px; }
.apps .open { border: 1px solid #3d566f; box-shadow: inset 0 0 0 1px #e6f0fa; background: linear-gradient(135deg, #d3dfed, #b4c8df); }
.apps .lit { background: linear-gradient(135deg, #fff, #d8e4f1); }
.app { font-size: 14px; font-weight: 700; fill: #fff; text-anchor: middle; }
.tray { margin-left: auto; display: flex; align-items: center; color: #fff; }
.tray button { width: 24px; }
.tray i.up { border-width: 5px; border-top: 0; border-bottom-color: #fff; }
.lang { margin: 0 8px 6px 9px; width: 16px; }
.clock { width: 80px; margin-left: 3px; display: flex; flex-direction: column; text-align: center; font-size: 11px; line-height: 17px; }
.tray .desk { width: 15px; height: 39px; border: 1px solid #c5d3e2; background: linear-gradient(135deg, #8a9bb0, #52647c, #8a9bb0); }
```
